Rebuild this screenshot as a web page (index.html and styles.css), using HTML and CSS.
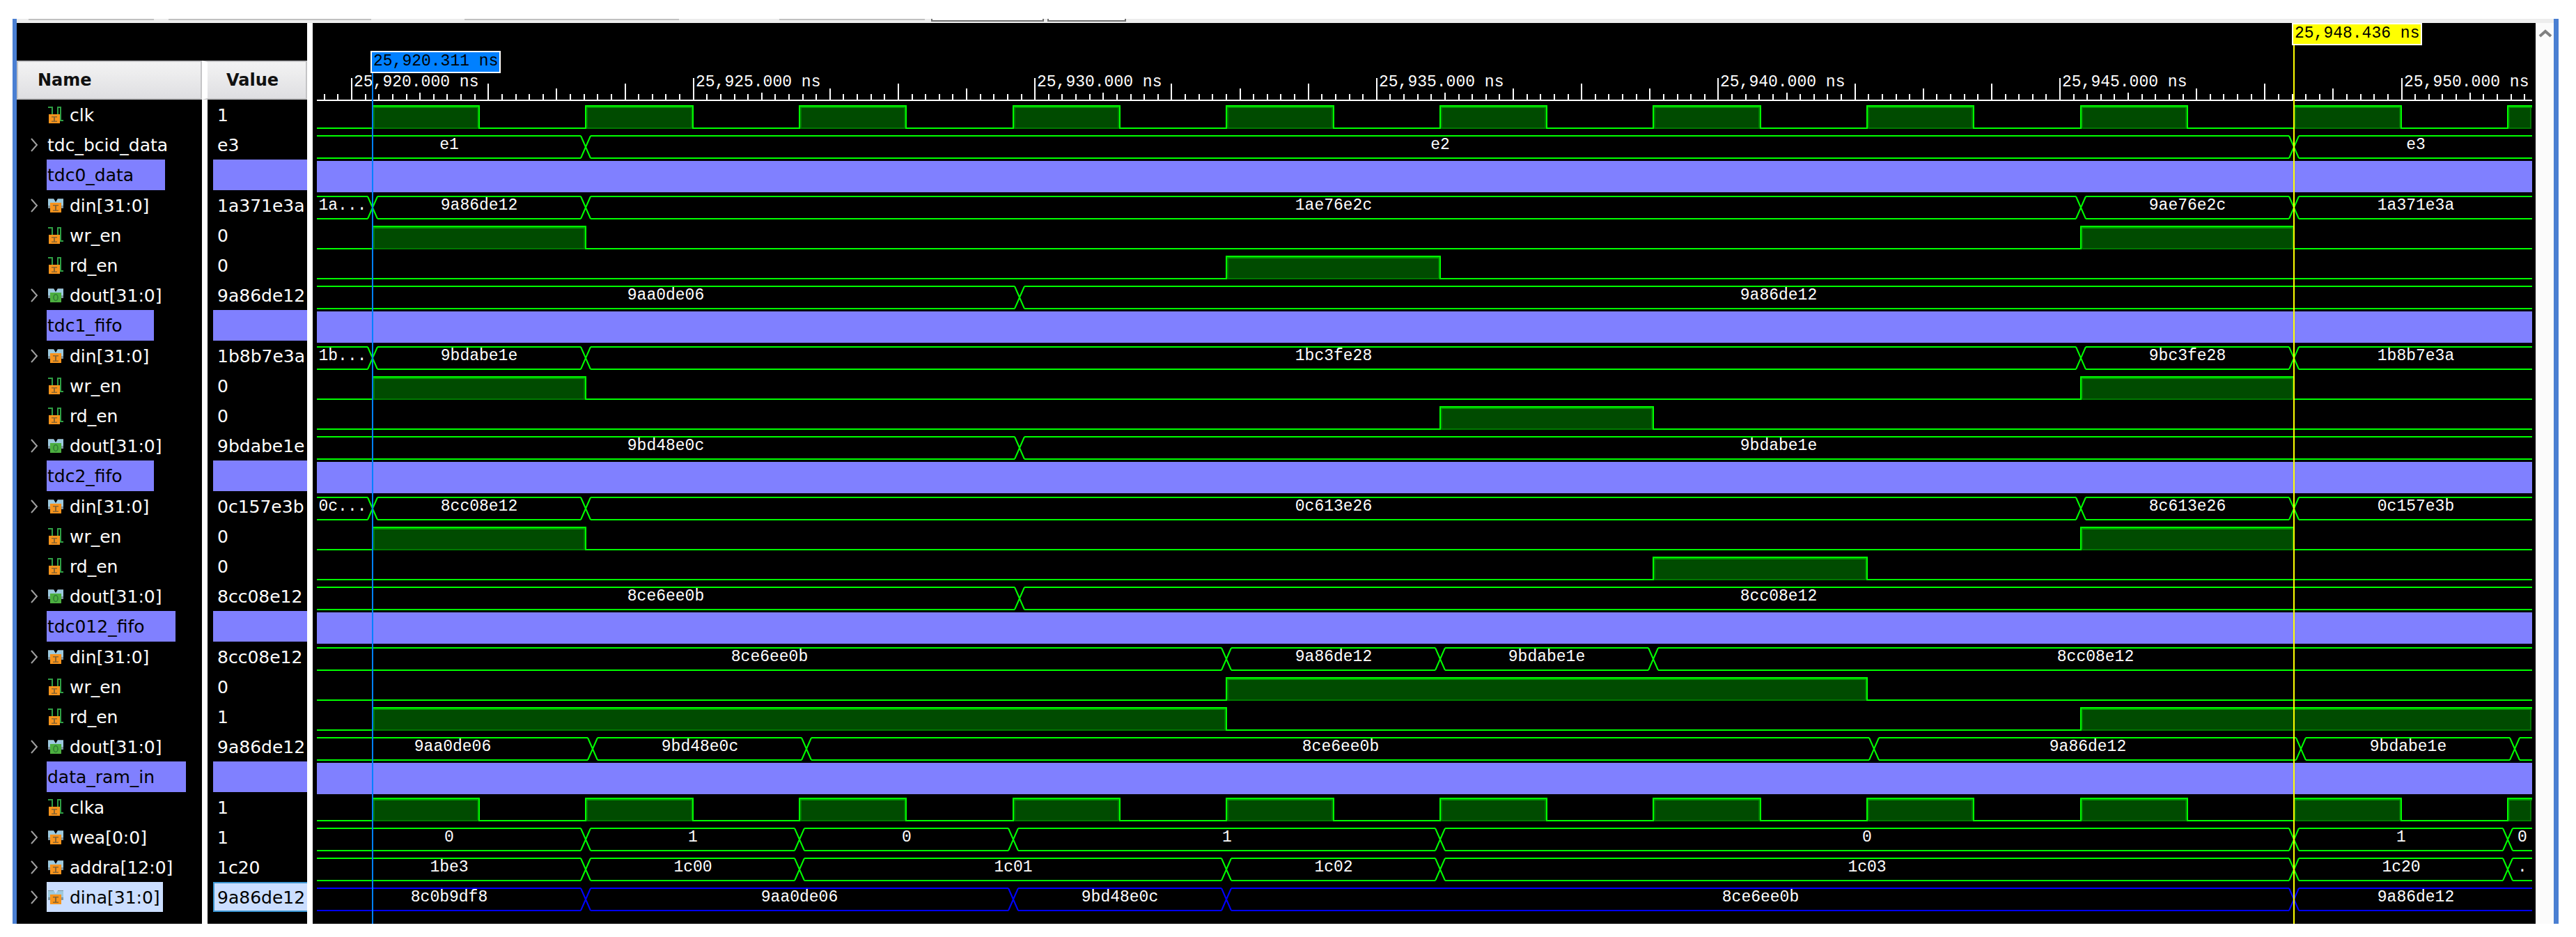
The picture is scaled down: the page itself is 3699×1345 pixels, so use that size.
FILE: index.html
```
<!DOCTYPE html>
<html lang="en">

<head>
    <meta charset="UTF-8">
    <meta name="viewport" content="width=device-width, initial-scale=1.0">
    <title>Waveform Viewer</title>
    <link rel="stylesheet" href="styles.css">
</head>

<body>
    <!-- Signal icons -->
    <svg class="icon-defs" aria-hidden="true">
        <symbol id="icon-scalar" viewBox="0 0 24 24">
            <path d="M1 1h6v13M15 14V1h4v19h4" fill="none" stroke="#2f9e44" stroke-width="2" />
            <rect x="2" y="11" width="16" height="13" fill="#f7941d" />
            <path d="M6 14h8v1.500h-3v5h3V22H6v-1.500h3v-5H6z" fill="#8a6530" />
        </symbol>
        <symbol id="icon-bus-in" viewBox="0 0 24 24">
            <path d="M1 2h8l3 5 3-5h8v14H1z" fill="#9cc9de" />
            <path d="M1 12h3v4H1zM20 12h3v4h-3zM1 2h8v1H1zM15 2h8v1h-8z" fill="#7d96a3" />
            <rect x="4" y="8" width="16" height="14" fill="#f7941d" />
            <path d="M8 11h8v1.500h-3v6h3V20H8v-1.500h3v-6H8z" fill="#8a6530" />
        </symbol>
        <symbol id="icon-bus-out" viewBox="0 0 24 24">
            <path d="M1 2h8l3 5 3-5h8v14H1z" fill="#9cc9de" />
            <path d="M1 12h3v4H1zM20 12h3v4h-3zM1 2h8v1H1zM15 2h8v1h-8z" fill="#7d96a3" />
            <rect x="4" y="8" width="16" height="14" fill="#4caf3f" />
            <ellipse cx="12" cy="15" rx="3" ry="4.500" fill="none" stroke="#2f7a35" stroke-width="1.500" />
        </symbol>
    </svg>

    <main class="window">
        <div class="toolbar">
            <span class="tool tool-a"></span>
            <span class="tool tool-b"></span>
            <span class="tool tool-c"></span>
            <span class="tool tool-d"></span>
            <span class="tool-box tool-e"></span>
            <span class="tool-box tool-f"></span>
        </div>

        <div class="viewer">
            <section class="signals">
                <table class="signal-table">
                    <thead>
                        <tr>
                            <th class="col-name">Name</th>
                            <th class="col-value">Value</th>
                        </tr>
                    </thead>
                    <tbody id="signalRows"></tbody>
                    <tfoot>
                        <tr>
                            <td class="col-name"></td>
                            <td class="col-value"></td>
                        </tr>
                    </tfoot>
                </table>
            </section>

            <section class="waves">
                <div class="plot" id="plot">
                    <svg class="ruler" id="ruler"></svg>
                    <div id="waveRows"></div>
                    <div class="cursor cursor-blue" data-edge="0">
                        <span class="cursor-label">25,920.311 ns</span>
                    </div>
                    <div class="cursor cursor-yellow" data-edge="9">
                        <span class="cursor-label">25,948.436 ns</span>
                    </div>
                </div>
            </section>

            <div class="scrollbar">
                <button class="scroll-up" type="button" aria-label="Scroll up">
                    <svg viewBox="0 0 20 12"><path d="M2 10l8-7 8 7" fill="none" stroke="#808080" stroke-width="4" /></svg>
                </button>
            </div>
        </div>
    </main>

    <script>
        // Visible time range in ns
        const START = 25919.49;
        const END = 25951.91;
        const FIRST_EDGE = 25920.303;
        const PERIOD = 3.125;

        // Wave times are in clock periods after the first rising edge.
        // pulses: [rise, fall], bus: [label, end]
        const clock = [];
        for (let k = 0; k <= 10; k++) clock.push([k, k + 0.5]);
        const LAG = 0.032;

        const signals = [
            { name: 'clk', value: '1', pulses: clock },
            { name: 'tdc_bcid_data', value: 'e3', icon: 'none', bus: [['e1', 1], ['e2', 9], ['e3', 99]] },
            { divider: 'tdc0_data' },
            { name: 'din[31:0]', value: '1a371e3a', icon: 'bus-in', bus: [['1a...', 0], ['9a86de12', 1], ['1ae76e2c', 8], ['9ae76e2c', 9], ['1a371e3a', 99]] },
            { name: 'wr_en', value: '0', pulses: [[0, 1], [8, 9]] },
            { name: 'rd_en', value: '0', pulses: [[4, 5]] },
            { name: 'dout[31:0]', value: '9a86de12', icon: 'bus-out', bus: [['9aa0de06', 3 + LAG], ['9a86de12', 99]] },
            { divider: 'tdc1_fifo' },
            { name: 'din[31:0]', value: '1b8b7e3a', icon: 'bus-in', bus: [['1b...', 0], ['9bdabe1e', 1], ['1bc3fe28', 8], ['9bc3fe28', 9], ['1b8b7e3a', 99]] },
            { name: 'wr_en', value: '0', pulses: [[0, 1], [8, 9]] },
            { name: 'rd_en', value: '0', pulses: [[5, 6]] },
            { name: 'dout[31:0]', value: '9bdabe1e', icon: 'bus-out', bus: [['9bd48e0c', 3 + LAG], ['9bdabe1e', 99]] },
            { divider: 'tdc2_fifo' },
            { name: 'din[31:0]', value: '0c157e3b', icon: 'bus-in', bus: [['0c...', 0], ['8cc08e12', 1], ['0c613e26', 8], ['8c613e26', 9], ['0c157e3b', 99]] },
            { name: 'wr_en', value: '0', pulses: [[0, 1], [8, 9]] },
            { name: 'rd_en', value: '0', pulses: [[6, 7]] },
            { name: 'dout[31:0]', value: '8cc08e12', icon: 'bus-out', bus: [['8ce6ee0b', 3 + LAG], ['8cc08e12', 99]] },
            { divider: 'tdc012_fifo' },
            { name: 'din[31:0]', value: '8cc08e12', icon: 'bus-in', bus: [['8ce6ee0b', 4], ['9a86de12', 5], ['9bdabe1e', 6], ['8cc08e12', 99]] },
            { name: 'wr_en', value: '0', pulses: [[4, 7]] },
            { name: 'rd_en', value: '1', pulses: [[0, 4], [8, 99]] },
            { name: 'dout[31:0]', value: '9a86de12', icon: 'bus-out', bus: [['9aa0de06', 1 + LAG], ['9bd48e0c', 2 + LAG], ['8ce6ee0b', 7 + LAG], ['9a86de12', 9 + LAG], ['9bdabe1e', 10 + LAG], ['', 99]] },
            { divider: 'data_ram_in' },
            { name: 'clka', value: '1', pulses: clock },
            { name: 'wea[0:0]', value: '1', icon: 'bus-in', bus: [['0', 1], ['1', 2], ['0', 3], ['1', 5], ['0', 9], ['1', 10], ['0', 99]] },
            { name: 'addra[12:0]', value: '1c20', icon: 'bus-in', bus: [['1be3', 1], ['1c00', 2], ['1c01', 4], ['1c02', 5], ['1c03', 9], ['1c20', 10], ['.', 99]] },
            { name: 'dina[31:0]', value: '9a86de12', icon: 'bus-in', selected: true, bus: [['8c0b9df8', 1], ['9aa0de06', 3], ['9bd48e0c', 4], ['8ce6ee0b', 9], ['9a86de12', 99]] }
        ];

        const plot = document.getElementById('plot');
        let width = 0;

        function timeToX(t) {
            return Math.round((t - START) / (END - START) * width);
        }

        function edgeToX(k) {
            return Math.min(width, timeToX(FIRST_EDGE + k * PERIOD));
        }

        // Name and value columns
        function drawTable() {
            document.getElementById('signalRows').innerHTML = signals.map(s => {
                if (s.divider) {
                    return `<tr class="divider"><td class="col-name"><span class="name-box">${s.divider}</span></td><td class="col-value"><div class="value-box"></div></td></tr>`;
                }
                const icon = s.icon || 'scalar';
                const arrow = icon === 'scalar' ? '' : '<svg class="arrow" viewBox="0 0 12 20"><path d="M2 1l8 9-8 9" fill="none" stroke="#a0a0a0" stroke-width="2"/></svg>';
                const image = icon === 'none' ? '' : `<svg class="icon"><use href="#icon-${icon}"/></svg>`;
                return `<tr class="${s.selected ? 'selected' : ''}"><td class="col-name">${arrow}<span class="name-box">${image}<span>${s.name}</span></span></td><td class="col-value"><div class="value-box">${s.value}</div></td></tr>`;
            }).join('');
        }

        function drawRuler() {
            let out = '';
            for (let i = Math.ceil(START * 5); i <= END * 5; i++) {
                const ns = i / 5;
                const x = timeToX(ns);
                let top = 102;
                if (i % 25 === 0) {
                    top = 79;
                    const label = ns.toLocaleString('en-US', { minimumFractionDigits: 3 });
                    out += `<text x="${x + 3}" y="91">${label} ns</text>`;
                } else if (i % 5 === 0) {
                    top = ns % 5 === 1 ? 100 : ns % 2 === 0 ? 87 : 94;
                }
                out += `<rect x="${x - 1}" y="${top}" width="2" height="${110 - top}"/>`;
            }
            out += `<rect x="0" y="110" width="${width}" height="2"/>`;
            document.getElementById('ruler').innerHTML = out;
        }

        function drawPulses(pulses) {
            let out = '';
            let line = 'M0 39';
            pulses.forEach(([rise, fall]) => {
                const a = edgeToX(rise);
                const b = edgeToX(fall);
                out += `<rect class="fill" x="${a + 2}" y="8" width="${b - a - 4}" height="31"/>`;
                out += `<rect class="shade" x="${a}" y="8" width="${b - a}" height="2"/>`;
                line += `H${a}V7H${b}`;
                if (b < width) line += 'V39';
            });
            if (edgeToX(pulses[pulses.length - 1][1]) < width) line += `H${width}`;
            return out + `<path class="line" d="${line}"/>`;
        }

        function drawBus(bus) {
            let out = '';
            let from = 0;
            bus.forEach(([label, end], i) => {
                const to = edgeToX(end);
                const left = i === 0 ? 0 : from + 7;
                const right = to === width ? to : to - 7;
                out += `<path class="line" d="M${left} 7H${right}M${left} 39H${right}"/>`;
                if (to < width) {
                    out += `<path class="line" d="M${right} 7L${to + 7} 39M${right} 39L${to + 7} 7"/>`;
                }
                out += `<text x="${Math.round((left + right) / 2)}" y="26">${label}</text>`;
                from = to;
            });
            return out;
        }

        function drawWaves() {
            width = plot.clientWidth;
            drawRuler();
            document.getElementById('waveRows').innerHTML = signals.map(s => {
                if (s.divider) return '<div class="wave-divider"></div>';
                return `<svg class="wave ${s.selected ? 'wave-selected' : ''}">${s.pulses ? drawPulses(s.pulses) : drawBus(s.bus)}</svg>`;
            }).join('');
            document.querySelectorAll('.cursor').forEach(c => {
                c.style.left = edgeToX(Number(c.dataset.edge)) + 'px';
            });
        }

        drawTable();
        drawWaves();
        window.addEventListener('resize', drawWaves);
    </script>
</body>

</html>
```

FILE: styles.css
```
* {
    box-sizing: border-box;
}

body {
    margin: 0;
    padding: 27px 25px 19px 18px;
    background-color: #fff;
    font-family: "DejaVu Sans", sans-serif;
    font-size: 25px;
}

.icon-defs {
    display: none;
}

.window {
    border-left: 6px solid #4a7fd2;
    border-right: 7px solid #4a7fd2;
}

/* Bottom edge of the toolbar */
.toolbar {
    display: flex;
    height: 6px;
    padding-left: 17px;
    background-color: #ededed;
}

.tool {
    height: 2px;
    background-color: #c0c0c0;
}

.tool-a {
    width: 180px;
    margin-right: 21px;
}

.tool-b {
    width: 291px;
    margin-right: 134px;
}

.tool-c {
    width: 308px;
    margin-right: 144px;
}

.tool-d {
    width: 209px;
    margin-right: 9px;
}

.tool-box {
    height: 4px;
    border: 2px solid #707070;
    border-top: none;
    background-color: #fff;
}

.tool-e {
    width: 162px;
    margin-right: 5px;
}

.tool-f {
    width: 113px;
}

.viewer {
    display: flex;
}

/* Name / value table */
.signals {
    flex: none;
    width: 417px;
    padding-top: 54px;
    background-color: #000;
}

.signal-table {
    width: 100%;
    table-layout: fixed;
    border-collapse: separate;
    border-spacing: 0;
    color: #fff;
}

th {
    height: 56px;
    padding: 0 0 0 28px;
    border: 2px solid #c4c4c6;
    background-image: linear-gradient(#f3f3f3, #dfdfe2);
    color: #111;
    font-size: 24px;
    text-align: left;
}

td {
    height: 43px;
    padding: 0;
    line-height: 45px;
    white-space: nowrap;
    vertical-align: top;
}

.col-name {
    width: 266px;
}

.col-value {
    width: 151px;
    border-left: 8px solid #fff;
}

th.col-value {
    padding-left: 27px;
}

td.col-name {
    padding-left: 43px;
}

td.col-value {
    padding-left: 8px;
}

.arrow {
    float: left;
    width: 12px;
    height: 20px;
    margin: 12px 12px 0 -24px;
}

.name-box {
    display: flex;
    align-items: flex-start;
    width: fit-content;
    height: 43px;
    padding: 0 4px 0 1px;
}

.icon {
    width: 24px;
    height: 24px;
    margin: 10px 8px 0 0;
}

.value-box {
    height: 43px;
    padding-left: 6px;
    overflow: hidden;
}

.divider td,
.divider .name-box,
.divider .value-box {
    height: 44px;
}

.divider .name-box {
    padding-right: 45px;
    background-color: #8080ff;
    color: #000;
}

.divider .value-box {
    background-color: #8080ff;
}

.selected .name-box,
.selected .value-box {
    background-color: #cbdeff;
    color: #000;
}

.selected .value-box {
    padding-left: 4px;
    border: 2px solid #3c96d2;
    border-right: none;
    line-height: 41px;
}

tfoot td {
    height: 17px;
}

/* Waveforms */
.waves {
    flex: 1;
    min-width: 0;
    padding: 0 5px 0 6px;
    border-left: 8px solid #fff;
    background-color: #000;
}

.plot {
    position: relative;
    height: 100%;
}

.ruler {
    display: block;
    width: 100%;
    height: 112px;
    fill: #fff;
}

.ruler text,
.wave text,
.cursor-label {
    font-family: "Liberation Mono", monospace;
    font-size: 23px;
}

.wave {
    display: block;
    width: 100%;
    height: 43px;
    stroke: #00ff00;
}

.wave-selected {
    stroke: #0000ff;
}

.wave .line {
    fill: none;
    stroke-width: 2;
}

.wave .fill {
    fill: #004b00;
    stroke: #007800;
    stroke-width: 2;
}

.wave .shade {
    fill: #009b00;
    stroke: none;
}

.wave text {
    fill: #fff;
    stroke: none;
    text-anchor: middle;
}

.wave-divider {
    height: 44px;
    background-color: #8080ff;
    box-shadow: 0 1px #8080ff;
}

.cursor {
    position: absolute;
    bottom: 0;
    width: 2px;
    margin-left: -1px;
}

.cursor-blue {
    top: 72px;
    background-color: #0080ff;
}

.cursor-yellow {
    top: 32px;
    background-color: #ffff00;
}

.cursor-label {
    position: absolute;
    bottom: 100%;
    left: -2px;
    height: 32px;
    padding: 0 2px;
    border: 2px solid #fff;
    background-color: inherit;
    color: #000;
    line-height: 27px;
    white-space: nowrap;
}

.scrollbar {
    flex: none;
    width: 26px;
    background-color: #fbfbfb;
}

.scroll-up {
    display: block;
    width: 100%;
    padding: 9px 2px 0 4px;
    border: none;
    background: none;
}

.scroll-up svg {
    display: block;
    width: 20px;
    height: 12px;
}
```
